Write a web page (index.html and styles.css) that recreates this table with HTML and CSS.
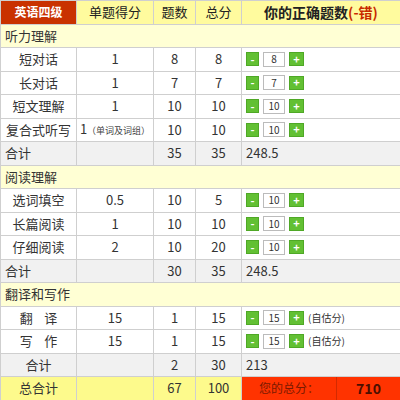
FILE: index.html
```html
<!DOCTYPE html>
<html>
<head>
<meta charset="utf-8">
<link rel="stylesheet" href="styles.css">
</head>
<body>
<table class="score">
  <colgroup>
    <col class="c1"><col class="c2"><col class="c3"><col class="c4"><col class="c5">
  </colgroup>
  <tr class="head">
    <th class="brand">英语四级</th>
    <th>单题得分</th>
    <th>题数</th>
    <th>总分</th>
    <th class="big">你的正确题数<span class="red">(-错)</span></th>
  </tr>
  <tr class="section"><td colspan="5">听力理解</td></tr>
  <tr><td>短对话</td><td>1</td><td>8</td><td>8</td><td class="ctl-cell"><div class="ctl"><span class="btn">-</span><span class="box">8</span><span class="btn plus">+</span></div></td></tr>
  <tr><td>长对话</td><td>1</td><td>7</td><td>7</td><td class="ctl-cell"><div class="ctl"><span class="btn">-</span><span class="box">7</span><span class="btn plus">+</span></div></td></tr>
  <tr><td>短文理解</td><td>1</td><td>10</td><td>10</td><td class="ctl-cell"><div class="ctl"><span class="btn">-</span><span class="box">10</span><span class="btn plus">+</span></div></td></tr>
  <tr><td>复合式听写</td><td>1<span class="tiny">（单词及词组）</span></td><td>10</td><td>10</td><td class="ctl-cell"><div class="ctl"><span class="btn">-</span><span class="box">10</span><span class="btn plus">+</span></div></td></tr>
  <tr class="sum"><td class="left">合计</td><td></td><td>35</td><td>35</td><td class="left">248.5</td></tr>
  <tr class="section"><td colspan="5">阅读理解</td></tr>
  <tr><td>选词填空</td><td>0.5</td><td>10</td><td>5</td><td class="ctl-cell"><div class="ctl"><span class="btn">-</span><span class="box">10</span><span class="btn plus">+</span></div></td></tr>
  <tr><td>长篇阅读</td><td>1</td><td>10</td><td>10</td><td class="ctl-cell"><div class="ctl"><span class="btn">-</span><span class="box">10</span><span class="btn plus">+</span></div></td></tr>
  <tr><td>仔细阅读</td><td>2</td><td>10</td><td>20</td><td class="ctl-cell"><div class="ctl"><span class="btn">-</span><span class="box">10</span><span class="btn plus">+</span></div></td></tr>
  <tr class="sum"><td class="left">合计</td><td></td><td>30</td><td>35</td><td class="left">248.5</td></tr>
  <tr class="section"><td colspan="5">翻译和写作</td></tr>
  <tr><td>翻&nbsp;&nbsp;&nbsp;&nbsp;译</td><td>15</td><td>1</td><td>15</td><td class="ctl-cell"><div class="ctl"><span class="btn">-</span><span class="box">15</span><span class="btn plus">+</span><span class="note">(自估分)</span></div></td></tr>
  <tr><td>写&nbsp;&nbsp;&nbsp;&nbsp;作</td><td>15</td><td>1</td><td>15</td><td class="ctl-cell"><div class="ctl"><span class="btn">-</span><span class="box">15</span><span class="btn plus">+</span><span class="note">(自估分)</span></div></td></tr>
  <tr class="sum"><td>合计</td><td></td><td>2</td><td>30</td><td class="left">213</td></tr>
  <tr class="total"><td>总合计</td><td></td><td>67</td><td>100</td><td class="result"><div class="res"><span class="res-label">您的总分：</span><span class="res-num">710</span></div></td></tr>
</table>
</body>
</html>
```
FILE: styles.css
```css
html, body {
  margin: 0;
  padding: 0;
  background: #fff;
}
body {
  font-family: "Noto Sans CJK SC", "DejaVu Sans", sans-serif;
  font-size: 13px;
  color: #333;
}
.score {
  width: 400px;
  border-collapse: collapse;
  table-layout: fixed;
}
.c1 { width: 76px; }
.c2 { width: 77px; }
.c3 { width: 42px; }
.c4 { width: 46px; }
.c5 { width: 159px; }
.score td, .score th {
  border: 1px solid #cfcfcf;
  height: 23.5px;
  padding: 0;
  text-align: center;
  vertical-align: middle;
  white-space: nowrap;
  line-height: 16px;
  box-sizing: border-box;
}
.head th {
  background: #fffb9e;
  font-weight: normal;
  color: #222;
}
.head th.brand {
  background: #c93200;
  color: #fff;
  font-weight: bold;
  font-size: 12px;
}
.head th.big {
  font-weight: bold;
  font-size: 14px;
  color: #222;
}
.red { color: #c82a00; }
.section td {
  background: #ffffd4;
  text-align: left;
  padding-left: 4px;
}
.sum td { background: #f1f1f1; }
.score td.left {
  text-align: left;
  padding-left: 4px;
}
.tiny {
  font-size: 9px;
  color: #444;
}
.ctl-cell { text-align: left !important; padding-left: 4px !important; }
.ctl {
  display: flex;
  align-items: center;
  gap: 4px;
}
.btn {
  display: inline-flex;
  align-items: center;
  justify-content: center;
  width: 13px;
  height: 14px;
  background: #62c033;
  border: 1px solid #4fa826;
  box-sizing: border-box;
  color: #fff;
  font-size: 11px;
  font-weight: bold;
  line-height: 1;
}
.btn.plus { width: 15px; }
.box {
  display: inline-flex;
  align-items: center;
  justify-content: center;
  width: 22px;
  height: 15px;
  border: 1px solid #bbb;
  box-sizing: border-box;
  background: #fff;
  font-size: 10px;
  color: #333;
}
.note {
  font-size: 10px;
  color: #333;
}
.total td {
  background: #fdfa8c;
}
.total td.result {
  background: #ff3300;
  padding: 0;
}
.res {
  display: flex;
  height: 100%;
  align-items: stretch;
}
.res-label {
  width: 94px;
  display: flex;
  align-items: center;
  justify-content: center;
  color: #7a1a00;
  font-size: 12px;
  border-right: 1px solid #d42a00;
}
.res-num {
  flex: 1;
  display: flex;
  align-items: center;
  justify-content: center;
  font-weight: bold;
  font-size: 14px;
  color: #4a0f00;
}
```
